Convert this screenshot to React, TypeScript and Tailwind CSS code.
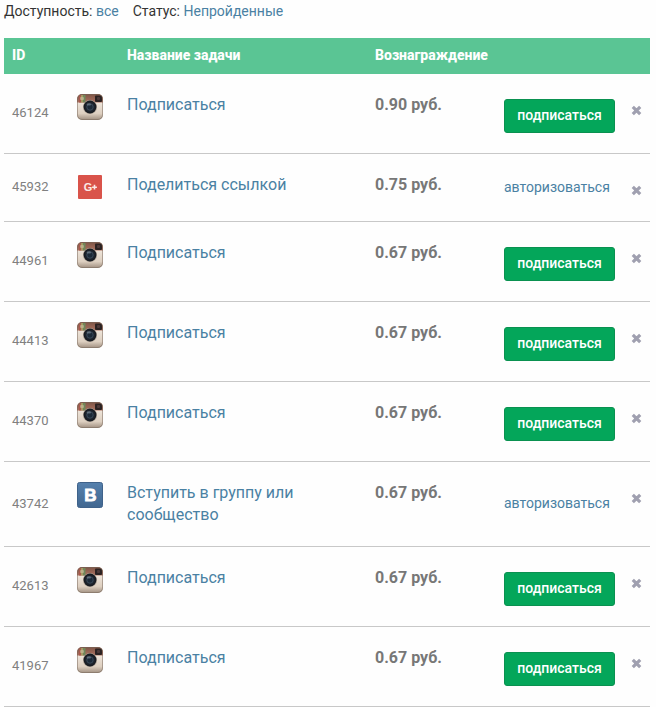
import { useState } from "react";

type Network = "instagram" | "google" | "vk";

interface Task {
  id: number;
  network: Network;
  title: string;
  reward: string;
  authorized: boolean;
}

const TASKS: Task[] = [
  { id: 46124, network: "instagram", title: "Подписаться", reward: "0.90", authorized: true },
  { id: 45932, network: "google", title: "Поделиться ссылкой", reward: "0.75", authorized: false },
  { id: 44961, network: "instagram", title: "Подписаться", reward: "0.67", authorized: true },
  { id: 44413, network: "instagram", title: "Подписаться", reward: "0.67", authorized: true },
  { id: 44370, network: "instagram", title: "Подписаться", reward: "0.67", authorized: true },
  { id: 43742, network: "vk", title: "Вступить в группу или сообщество", reward: "0.67", authorized: false },
  { id: 42613, network: "instagram", title: "Подписаться", reward: "0.67", authorized: true },
  { id: 41967, network: "instagram", title: "Подписаться", reward: "0.67", authorized: true },
];

function InstagramIcon() {
  return (
    <svg viewBox="0 0 26 26" className="block size-[26px]" role="img" aria-label="Instagram">
      <defs>
        <linearGradient id="ig-body" x1="0" y1="0" x2="0" y2="1">
          <stop offset="0.3" stopColor="#efe6dc" />
          <stop offset="0.75" stopColor="#ddcfc0" />
          <stop offset="1" stopColor="#a08f80" />
        </linearGradient>
        <linearGradient id="ig-top" x1="0" y1="0" x2="0" y2="1">
          <stop offset="0" stopColor="#7d5546" />
          <stop offset="1" stopColor="#ad7160" />
        </linearGradient>
        <radialGradient id="ig-lens">
          <stop offset="0" stopColor="#4a5a6c" />
          <stop offset="0.45" stopColor="#232c38" />
          <stop offset="1" stopColor="#15171c" />
        </radialGradient>
        <clipPath id="ig-clip">
          <rect width="26" height="26" rx="5" />
        </clipPath>
      </defs>
      <g clipPath="url(#ig-clip)">
        <rect width="26" height="26" fill="url(#ig-body)" />
        <rect width="26" height="8.5" fill="url(#ig-top)" />
        <rect x="2" y="1" width="2" height="7.5" fill="#a8594d" />
        <rect x="4" y="1" width="2" height="7.5" fill="#a79a63" />
        <rect x="6" y="1" width="2.5" height="7.5" fill="#71875a" />
        <rect x="3" y="3" width="4" height="3" rx="1" fill="#c9c0a0" fillOpacity="0.6" />
        <rect x="18" y="1.5" width="7" height="6.5" rx="1" fill="#2c2222" />
        <rect x="20" y="3" width="3" height="3" rx="1" fill="#4c3a3a" />
      </g>
      <rect x="0.5" y="0.5" width="25" height="25" rx="4.5" fill="none" stroke="#75655a" strokeOpacity="0.5" />
      <circle cx="13" cy="13" r="7" fill="#a89c90" />
      <circle cx="13" cy="13" r="6.4" fill="url(#ig-lens)" />
      <circle cx="13" cy="13" r="3.2" fill="#1d2a38" stroke="#4a5a6c" strokeWidth="0.6" />
      <ellipse cx="11.8" cy="10.4" rx="2.2" ry="1.2" fill="#8f9daa" fillOpacity="0.5" />
    </svg>
  );
}

function GoogleIcon() {
  return (
    <svg viewBox="0 0 26 26" className="block size-[26px]" role="img" aria-label="Google+">
      <rect x="1" y="1" width="24" height="24" rx="1" fill="#d9534a" />
      <text
        x="11"
        y="17"
        textAnchor="middle"
        fill="#fbe9e7"
        className="font-['Liberation_Sans',sans-serif] text-[11px] font-bold"
      >
        G
      </text>
      <path d="M17.5 10.8V15.6M15.1 13.2H19.9" stroke="#fbe9e7" strokeWidth="1.6" />
    </svg>
  );
}

function VkIcon() {
  return (
    <svg viewBox="0 0 26 26" className="block size-[26px]" role="img" aria-label="ВКонтакте">
      <defs>
        <linearGradient id="vk-bg" x1="0" y1="0" x2="0" y2="1">
          <stop offset="0" stopColor="#5580ad" />
          <stop offset="1" stopColor="#416790" />
        </linearGradient>
      </defs>
      <rect x="0.5" y="0.5" width="25" height="25" rx="2" fill="url(#vk-bg)" stroke="#3f628a" />
      <text
        x="13.5"
        y="19"
        textAnchor="middle"
        fill="#ffffff"
        stroke="#ffffff"
        strokeWidth="0.8"
        className="font-['Liberation_Sans',sans-serif] text-[17px] font-bold"
      >
        B
      </text>
    </svg>
  );
}

const ICONS = {
  instagram: InstagramIcon,
  google: GoogleIcon,
  vk: VkIcon,
};

export default function App() {
  const [tasks, setTasks] = useState(TASKS);

  const hide = (id: number) => setTasks((prev) => prev.filter((t) => t.id !== id));

  return (
    <div className="bg-[#fefefe] pr-1.5 pl-1 font-[Roboto,sans-serif] text-sm text-[#333]">
      <div className="flex gap-3.5 pt-px pb-[17px] leading-5">
        <span>
          Доступность: <a href="#all" className="text-[#4a81a3]">все</a>
        </span>
        <span>
          Статус: <a href="#status" className="text-[#4a81a3]">Непройденные</a>
        </span>
      </div>

      <table className="w-full table-fixed border-separate border-spacing-0 text-left">
        <thead>
          <tr className="h-9 bg-[#5ac594] text-sm text-white">
            <th className="w-[65px] px-2 pb-0.5 font-extrabold">ID</th>
            <th className="w-[50px]" />
            <th className="px-2 pb-0.5 font-extrabold">Название задачи</th>
            <th className="w-[129px] px-2 pb-0.5 font-extrabold">Вознаграждение</th>
            <th className="w-[127px]" />
            <th className="w-[27px]" />
          </tr>
        </thead>
        <tbody>
          {tasks.map((task) => {
            const Icon = ICONS[task.network];
            return (
              <tr key={task.id} className="align-top *:border-b *:border-[#c8c8c8]">
                <td className="px-2 align-middle text-[13px] text-[#808080]">{task.id}</td>
                <td className="px-2 py-5">
                  <Icon />
                </td>
                <td className="px-2 py-5 text-base leading-[22px]">
                  <a href={`#task-${task.id}`} className="block text-[#4a81a3]">
                    {task.title}
                  </a>
                </td>
                <td className="px-2 py-5 text-base leading-[22px] font-bold text-[#777]">
                  {task.reward} руб.
                </td>
                {task.authorized ? (
                  <td className="px-2 pt-[25px] pb-5">
                    <button
                      type="button"
                      className="block h-[34px] w-full rounded-[3px] border border-[#0a9150] bg-[#04a65a] pb-0.5 text-center text-sm font-medium text-white"
                    >
                      подписаться
                    </button>
                  </td>
                ) : (
                  <td className="px-2 pb-0.5 align-middle whitespace-nowrap">
                    <a href="#auth" className="text-[#4a81a3]">авторизоваться</a>
                  </td>
                )}
                <td className="px-2 pt-6 pb-[19px]">
                  <button
                    type="button"
                    aria-label="Скрыть задачу"
                    onClick={() => hide(task.id)}
                    className="flex h-6 w-[11px] items-center text-[#a0a0b0]"
                  >
                    <svg viewBox="0 0 11 11" className="size-[11px]">
                      <path d="M1.8 1.8L9.2 9.2M9.2 1.8L1.8 9.2" fill="none" stroke="currentColor" strokeWidth="3.2" />
                    </svg>
                  </button>
                </td>
              </tr>
            );
          })}
        </tbody>
      </table>
    </div>
  );
}
